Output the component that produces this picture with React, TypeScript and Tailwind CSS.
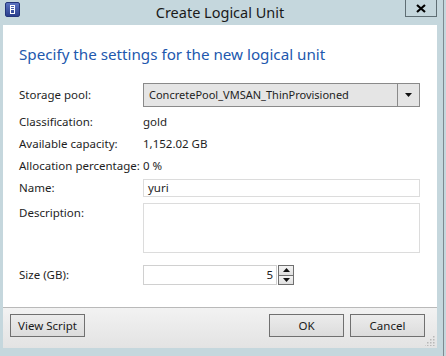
import React from "react";

const font = { fontFamily: "'Segoe UI', 'Noto Sans', 'Open Sans', sans-serif" };

function Btn({ children, className = "" }: { children: React.ReactNode; className?: string }) {
  return (
    <div
      className={`h-[23px] w-[75px] border border-[#707070] bg-gradient-to-b from-[#ececec] to-[#dcdcdc] flex items-center justify-center text-[11.5px] text-[#1a1a1a] ${className}`}
    >
      {children}
    </div>
  );
}

export default function App() {
  return (
    <div className="w-[446px] h-[356px] bg-[#c5d7dd] relative overflow-hidden" style={font}>
      {/* right edge line */}
      <div className="absolute left-[443px] top-0 w-px h-[356px] bg-[#7d8a90]" />
      {/* title bar */}
      <div className="h-[25px] flex items-start">
        <div className="ml-[5px] mt-[2px] w-[15px] h-[15px] rounded-[2px] bg-gradient-to-b from-[#5b73c0] to-[#2b3f8e] border border-[#24367a] flex items-center justify-center">
          <div className="w-[5px] h-[9px] border border-white flex flex-col justify-start pt-[1px] gap-[1px]">
            <div className="h-px bg-white" />
            <div className="h-px bg-white" />
          </div>
        </div>
        <div className="flex-1 ml-[15px] text-center text-[14.5px] leading-[22px] mt-px text-[#1a1a1a] whitespace-nowrap">
          Create Logical Unit
        </div>
        <div className="mr-[9px] w-[32px] h-[17px] border border-t-0 border-[#5f6e74] flex items-center justify-center">
          <svg width="10" height="9" viewBox="0 0 10 9">
            <path d="M1 1 L9 8 M9 1 L1 8" stroke="#000" strokeWidth="2.2" />
          </svg>
        </div>
      </div>
      {/* client */}
      <div className="ml-[3px] w-[434px] h-[323px] bg-white flex flex-col">
        <div className="flex-1 px-[16px] pt-[18px] text-[11.5px] text-[#1e1e1e] whitespace-nowrap">
          <div className="text-[15.2px] leading-[22px] text-[#2258ae]">
            Specify the settings for the new logical unit
          </div>
          {/* storage pool */}
          <div className="mt-[18px] flex items-center h-[24px]">
            <div className="w-[124px]">Storage pool:</div>
            <div className="w-[277px] h-[24px] border border-[#8a8a8a] bg-[#e5e5e5] flex items-center">
              <div className="flex-1 pl-[5px] text-[11px]">ConcretePool_VMSAN_ThinProvisioned</div>
              <div className="w-[22px] h-full border-l border-[#8a8a8a] flex items-center justify-center">
                <svg width="7" height="4" viewBox="0 0 7 4">
                  <path d="M0 0 H7 L3.5 4 Z" fill="#111" />
                </svg>
              </div>
            </div>
          </div>
          <div className="mt-[4px] flex items-center h-[22px]">
            <div className="w-[124px]">Classification:</div>
            <div>gold</div>
          </div>
          <div className="flex items-center h-[22px]">
            <div className="w-[124px]">Available capacity:</div>
            <div>1,152.02 GB</div>
          </div>
          <div className="flex items-center h-[22px]">
            <div className="w-[124px]">Allocation percentage:</div>
            <div>0 %</div>
          </div>
          <div className="mt-[2px] flex items-center h-[18px]">
            <div className="w-[124px]">Name:</div>
            <div className="w-[277px] h-[18px] border border-[#dcdcdc] flex items-center pl-[4px]">yuri</div>
          </div>
          <div className="mt-[6px] flex items-start">
            <div className="w-[124px] mt-[2px] leading-[16px]">Description:</div>
            <div className="w-[277px] h-[50px] border border-[#dcdcdc]" />
          </div>
          <div className="mt-[12px] flex items-center h-[20px]">
            <div className="w-[124px]">Size (GB):</div>
            <div className="w-[134px] h-[20px] border border-[#d0d0d0] flex items-center justify-end pr-[3px]">5</div>
            <div className="w-[16px] h-[20px] border border-[#707070] flex flex-col ml-[1px]">
              <div className="flex-1 bg-gradient-to-b from-[#f4f4f4] to-[#e0e0e0] border-b border-[#707070] flex items-center justify-center">
                <svg width="7" height="4" viewBox="0 0 7 4">
                  <path d="M0 4 H7 L3.5 0 Z" fill="#111" />
                </svg>
              </div>
              <div className="flex-1 bg-gradient-to-b from-[#f4f4f4] to-[#e0e0e0] flex items-center justify-center">
                <svg width="7" height="4" viewBox="0 0 7 4">
                  <path d="M0 0 H7 L3.5 4 Z" fill="#111" />
                </svg>
              </div>
            </div>
          </div>
        </div>
        {/* footer */}
        <div className="h-[41px] border-t border-[#b9b9b9] bg-gradient-to-b from-[#f2f2f2] to-[#e3e3e3] relative flex items-start pt-[6px] px-[7px]">
          <Btn>View Script</Btn>
          <div className="flex-1" />
          <Btn>OK</Btn>
          <Btn className="ml-[6px] mr-[5px]">Cancel</Btn>
          <svg className="absolute right-[2px] bottom-[2px]" width="10" height="10" viewBox="0 0 10 10">
            {[
              [8, 0], [8, 3], [8, 6], [8, 9], [5, 3], [5, 6], [5, 9], [2, 6], [2, 9], [-1, 9],
            ].map(([x, y], i) => (
              <rect key={i} x={x} y={y} width="1.5" height="1.5" fill="#b8b8b8" />
            ))}
          </svg>
        </div>
      </div>
    </div>
  );
}
